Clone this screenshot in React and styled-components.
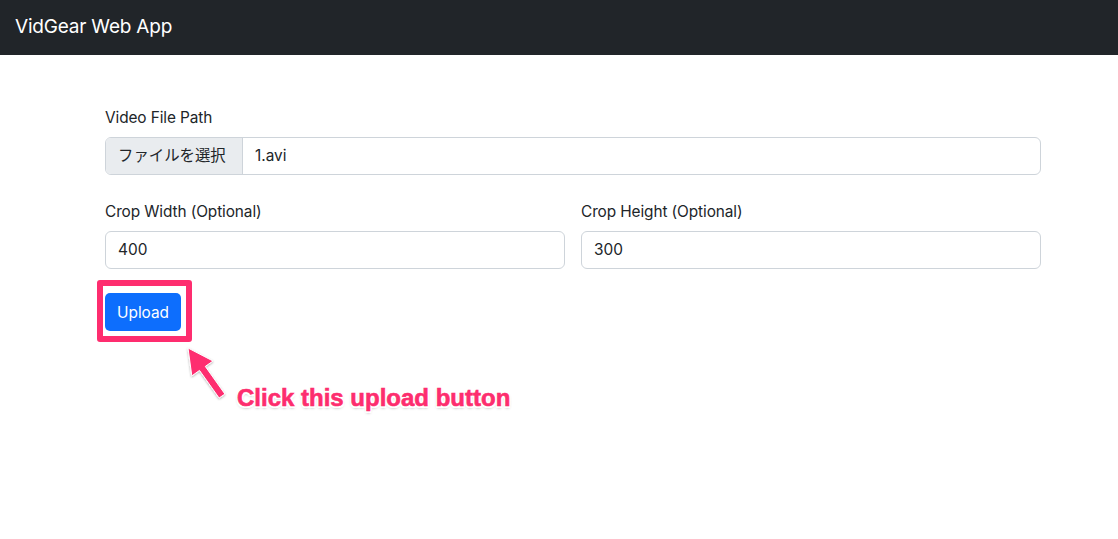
import React from 'react';
import styled, { createGlobalStyle } from 'styled-components';

const GlobalStyle = createGlobalStyle`
  * {
    box-sizing: border-box;
  }
  html, body {
    margin: 0;
    min-height: 100%;
    background: #fff;
  }
  body {
    color: #212529;
    font-family: Inter, "Liberation Sans", "Noto Sans CJK JP", sans-serif;
    font-size: 16px;
    line-height: 1.5;
  }
`;

const Navbar = styled.nav`
  height: 55px;
  background: #212529;
  display: flex;
  align-items: center;
  padding: 0 15px;
`;

const Brand = styled.span`
  color: #fff;
  font-size: 19px;
  letter-spacing: -0.2px;
`;

const Main = styled.main`
  width: 936px;
  margin-left: 105px;
  padding-top: 51px;
  padding-bottom: 100px;
`;

const Field = styled.div`
  display: flex;
  flex-direction: column;
`;

const Label = styled.label`
  font-size: 15.4px;
  letter-spacing: -0.1px;
  height: 20px;
  margin-bottom: 11px;
`;

const FileInput = styled.div`
  display: flex;
  height: 38px;
  border: 1px solid #ced4da;
  border-radius: 6px;
  overflow: hidden;
  font-size: 15.4px;
`;

const FileButton = styled.span`
  display: flex;
  align-items: center;
  width: 137px;
  padding-left: 12px;
  background: #e9ecef;
  border-right: 1px solid #ced4da;
  color: #212529;
`;

const FileName = styled.span`
  display: flex;
  align-items: center;
  padding-left: 12px;
`;

const Row = styled.div`
  display: grid;
  grid-template-columns: 1fr 1fr;
  gap: 16px;
  margin-top: 25px;
`;

const TextInput = styled.div`
  height: 38px;
  border: 1px solid #ced4da;
  border-radius: 6px;
  display: flex;
  align-items: center;
  padding-left: 12px;
  font-size: 15.4px;
`;

const Actions = styled.div`
  position: relative;
  margin-top: 24px;
  height: 140px;
`;

const Button = styled.button`
  height: 38px;
  padding: 0 12px;
  border: none;
  border-radius: 5px;
  background: #0d6efd;
  color: #fff;
  font-family: inherit;
  font-size: 15.4px;
`;

const Highlight = styled.div`
  position: absolute;
  left: -8px;
  top: -13px;
  width: 95px;
  height: 62px;
  border: 6px solid #fe2d6f;
  border-radius: 3px;
  pointer-events: none;
`;

const Arrow = styled.svg`
  position: absolute;
  left: 80px;
  top: 50px;
  overflow: visible;
`;

const Callout = styled.div`
  position: absolute;
  left: 132px;
  top: 90px;
  color: #fd2d6e;
  font-family: "Liberation Sans", Arial, sans-serif;
  font-weight: bold;
  font-size: 24px;
  line-height: 30px;
  letter-spacing: 0;
  white-space: nowrap;
  -webkit-text-stroke: 0.6px #fd2d6e;
  text-shadow:
    -1.5px -1.5px 0 #fff, 1.5px -1.5px 0 #fff, -1.5px 1.5px 0 #fff, 1.5px 1.5px 0 #fff,
    0 2px 3px rgba(0, 0, 0, 0.35);
`;

const App = () => (
  <>
    <GlobalStyle />
    <Navbar>
      <Brand>VidGear Web App</Brand>
    </Navbar>
    <Main>
      <Field>
        <Label>Video File Path</Label>
        <FileInput>
          <FileButton>ファイルを選択</FileButton>
          <FileName>1.avi</FileName>
        </FileInput>
      </Field>
      <Row>
        <Field>
          <Label>Crop Width (Optional)</Label>
          <TextInput>400</TextInput>
        </Field>
        <Field>
          <Label>Crop Height (Optional)</Label>
          <TextInput>300</TextInput>
        </Field>
      </Row>
      <Actions>
        <Button>Upload</Button>
        <Highlight />
        <Arrow width="50" height="60" viewBox="0 0 50 60">
          <defs>
            <filter id="arrowShadow" x="-30%" y="-30%" width="160%" height="160%">
              <feDropShadow dx="0" dy="1" stdDeviation="1" floodColor="#000" floodOpacity="0.3" />
            </filter>
          </defs>
          <path
            d="M3 5 L28 18 L20.3 23.4 L39.9 51 L34.1 55 L14.5 27.4 L6.8 32.9 Z"
            fill="#fe2d6f"
            stroke="#fff"
            strokeWidth="1"
            strokeLinejoin="round"
            filter="url(#arrowShadow)"
          />
        </Arrow>
        <Callout>Click this upload button</Callout>
      </Actions>
    </Main>
  </>
);

export default App;
